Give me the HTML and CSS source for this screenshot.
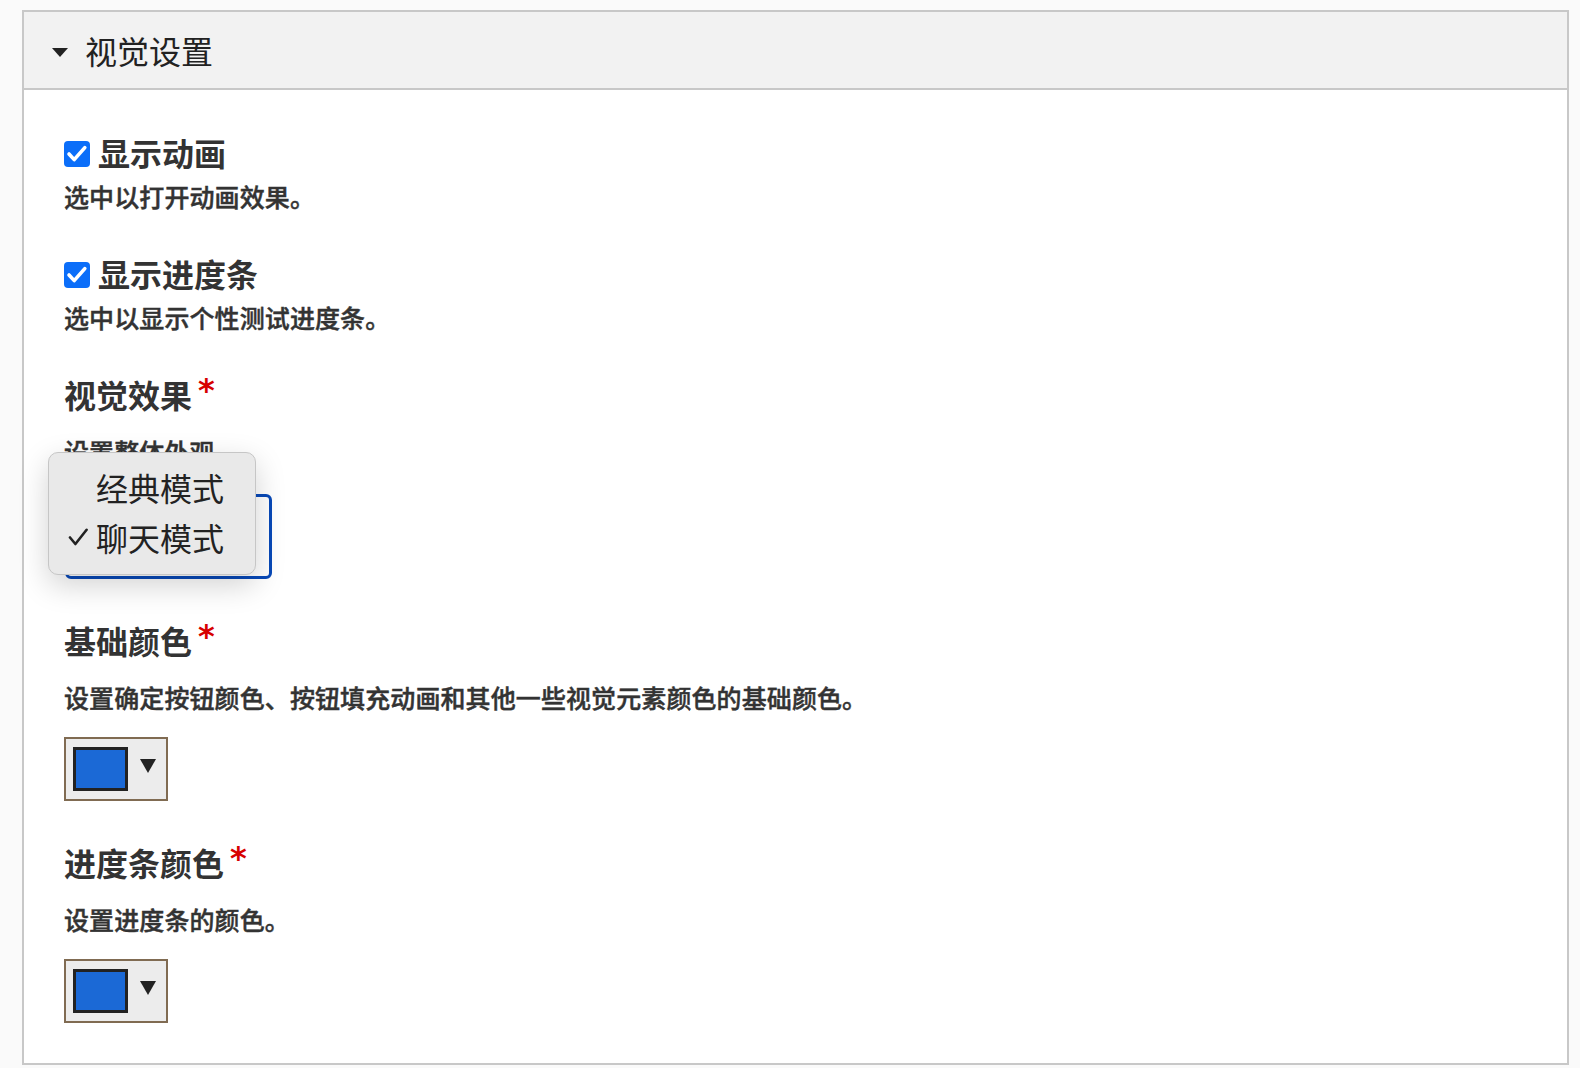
FILE: index.html
```html
<!DOCTYPE html>
<html lang="zh-CN">
<head>
  <meta charset="UTF-8">
  <meta name="viewport" content="width=device-width, initial-scale=1.0">
  <title>视觉设置</title>
  <link rel="stylesheet" href="styles.css">
</head>
<body>
  <div class="panel">
    <div class="panel-header">
      <span class="caret"></span>
      <h2 class="panel-title">视觉设置</h2>
    </div>

    <div class="panel-body">
      <div class="form-item">
        <label class="check-label">
          <span class="checkbox">
            <svg width="26" height="26" viewBox="0 0 26 26"><path d="M5 13 L10.2 18.6 L20.8 6.6" fill="none" stroke="#fff" stroke-width="3.6" stroke-linecap="round" stroke-linejoin="round"/></svg>
          </span>
          显示动画
        </label>
        <p class="desc">选中以打开动画效果。</p>
      </div>

      <div class="form-item">
        <label class="check-label">
          <span class="checkbox">
            <svg width="26" height="26" viewBox="0 0 26 26"><path d="M5 13 L10.2 18.6 L20.8 6.6" fill="none" stroke="#fff" stroke-width="3.6" stroke-linecap="round" stroke-linejoin="round"/></svg>
          </span>
          显示进度条
        </label>
        <p class="desc">选中以显示个性测试进度条。</p>
      </div>

      <div class="form-item">
        <div class="field-label">视觉效果<span class="required">*</span></div>
        <p class="desc">设置整体外观。</p>
        <div class="select-wrap">
          <div class="select"></div>
          <ul class="menu">
            <li><span class="tick"></span>经典模式</li>
            <li>
              <span class="tick">
                <svg width="20" height="18" viewBox="0 0 20 18"><path d="M2 9.5 L7.4 16 L18.6 1.8" fill="none" stroke="#222" stroke-width="2.6" stroke-linecap="round" stroke-linejoin="round"/></svg>
              </span>聊天模式
            </li>
          </ul>
        </div>
      </div>

      <div class="form-item">
        <div class="field-label">基础颜色<span class="required">*</span></div>
        <p class="desc">设置确定按钮颜色、按钮填充动画和其他一些视觉元素颜色的基础颜色。</p>
        <div class="color-btn">
          <span class="swatch"></span>
          <span class="arrow"></span>
        </div>
      </div>

      <div class="form-item">
        <div class="field-label">进度条颜色<span class="required">*</span></div>
        <p class="desc">设置进度条的颜色。</p>
        <div class="color-btn">
          <span class="swatch"></span>
          <span class="arrow"></span>
        </div>
      </div>
    </div>
  </div>
</body>
</html>
```

FILE: styles.css
```css
body {
  margin: 0;
  background: #fafafa;
  color: #333;
  font-family: "Noto Sans CJK SC", "Noto Sans", sans-serif;
}

.panel {
  margin: 10px 11px 0 22px;
  border: 2px solid #c8c8c8;
  background: #fff;
}

.panel-header {
  display: flex;
  align-items: center;
  height: 76px;
  padding-left: 28px;
  background: #f2f2f2;
  border-bottom: 2px solid #c8c8c8;
}

.caret {
  width: 0;
  height: 0;
  margin: 4px 17px 0 0;
  border-left: 8px solid transparent;
  border-right: 8px solid transparent;
  border-top: 9px solid #222;
}

.panel-title {
  margin: 0;
  font-size: 32px;
  font-weight: 400;
  line-height: 40px;
  color: #222;
}

.panel-body {
  padding: 42px 40px 40px;
}

.form-item + .form-item {
  margin-top: 41px;
}

.check-label {
  display: flex;
  align-items: center;
  gap: 8px;
  font-size: 32px;
  font-weight: 700;
  line-height: 40px;
}

.checkbox {
  display: flex;
  width: 26px;
  height: 26px;
  margin-top: 4px;
  border-radius: 4px;
  background: #0b6ef9;
}

.field-label {
  font-size: 32px;
  font-weight: 700;
  line-height: 40px;
}

.required {
  display: inline-block;
  margin-left: 6px;
  vertical-align: top;
  font-family: "DejaVu Sans", sans-serif;
  font-size: 32px;
  line-height: 1;
  color: #d70000;
}

.desc {
  margin: 21px 0 0;
  font-size: 25px;
  font-weight: 500;
  line-height: 32px;
  letter-spacing: 0.1px;
  -webkit-text-stroke: 0.45px #333;
}

.check-label + .desc {
  margin-top: 8px;
}

/* select with its open option list */
.select-wrap {
  position: relative;
  width: 207px;
  height: 85px;
  margin: 27px 0 0 1px;
}

.select {
  box-sizing: border-box;
  height: 100%;
  border: 3px solid #0849b8;
  border-radius: 6px;
  background: #fff;
}

.menu {
  position: absolute;
  left: -17px;
  top: -42px;
  box-sizing: border-box;
  width: 208px;
  margin: 0;
  padding: 9px 0 12px;
  list-style: none;
  background: #e9e9e9;
  border: 1px solid #c6c6c6;
  border-radius: 10px;
  box-shadow: 0 10px 30px rgba(0, 0, 0, 0.18);
}

.menu li {
  display: flex;
  align-items: center;
  height: 50px;
  padding-left: 19px;
  font-size: 32px;
  color: #222;
}

.tick {
  display: flex;
  width: 28px;
}

/* colour picker button */
.color-btn {
  display: flex;
  align-items: center;
  gap: 12px;
  width: max-content;
  margin-top: 24px;
  padding: 8px 10px 8px 7px;
  border: 2px solid #806b52;
  background: #ececec;
}

.swatch {
  box-sizing: border-box;
  width: 55px;
  height: 44px;
  border: 3px solid #222;
  background: #1b69d6;
}

.arrow {
  width: 0;
  height: 0;
  margin-bottom: 6px;
  border-left: 8px solid transparent;
  border-right: 8px solid transparent;
  border-top: 14px solid #222;
}
```
